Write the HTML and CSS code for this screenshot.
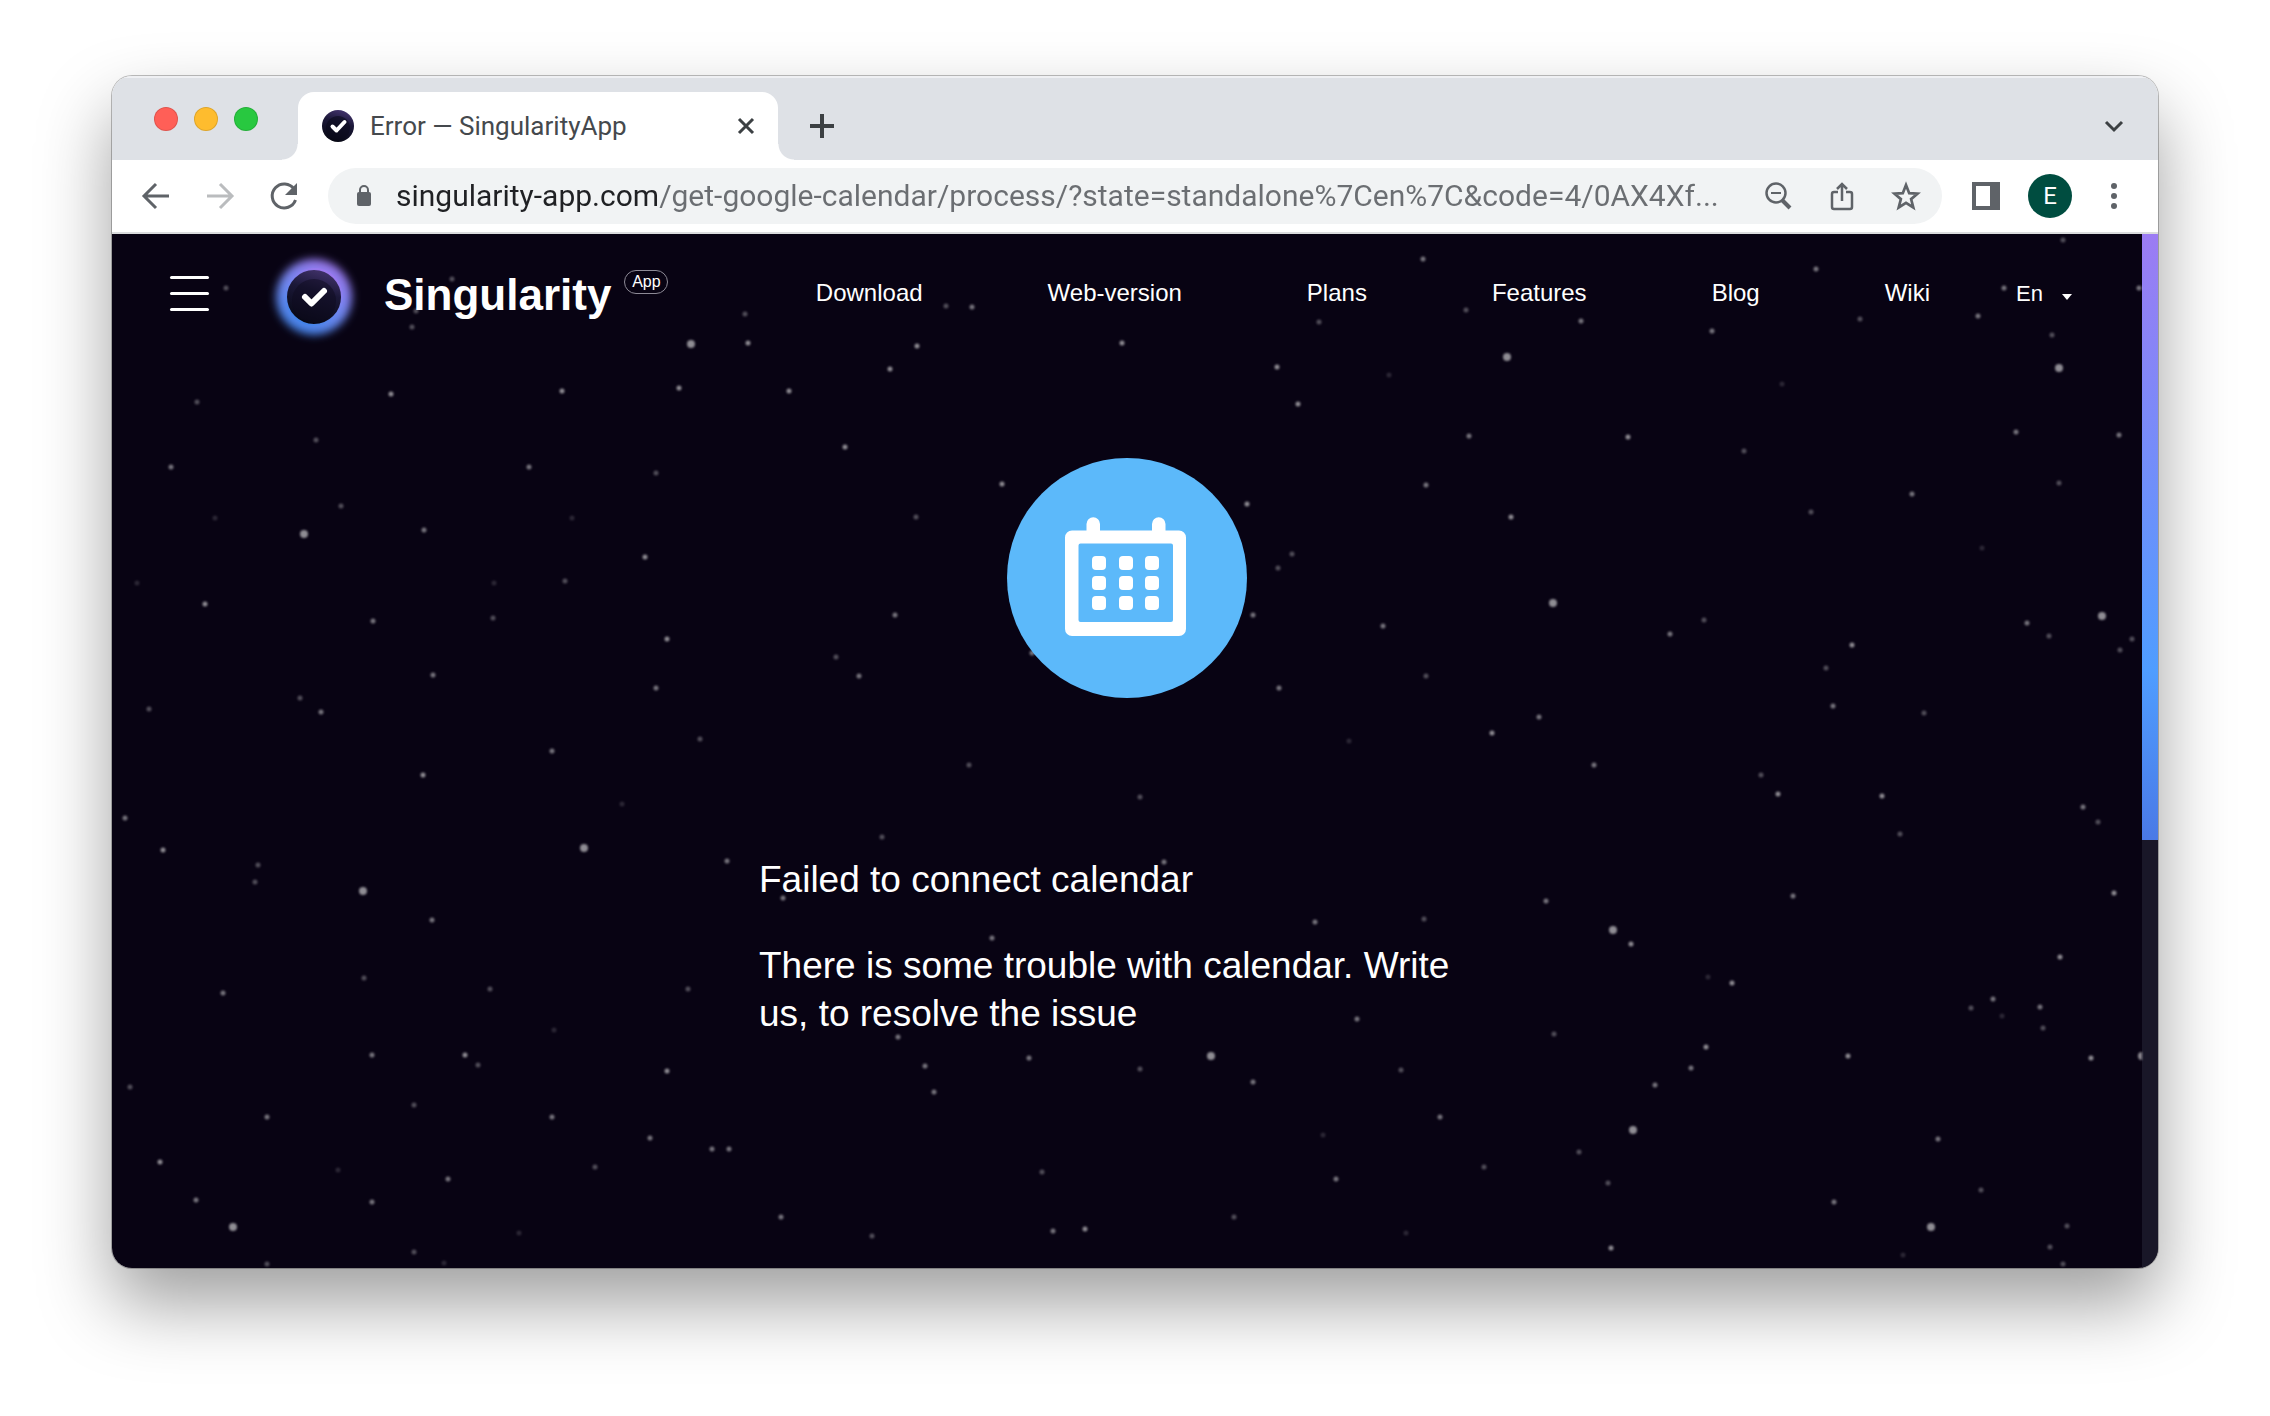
FILE: index.html
```
<!DOCTYPE html>
<html lang="en">
<head>
    <meta charset="UTF-8">
    <meta name="viewport" content="width=device-width, initial-scale=1.0">
    <title>Error — SingularityApp</title>
    <link rel="stylesheet" href="styles.css">
</head>
<body>
    <div class="window">
        <!-- tab strip -->
        <div class="tab-strip">
            <div class="lights">
                <button class="light light-close" aria-label="Close window"></button>
                <button class="light light-min" aria-label="Minimize"></button>
                <button class="light light-max" aria-label="Maximize"></button>
            </div>
            <div class="tab">
                <svg class="favicon" viewBox="0 0 32 32">
                    <defs>
                        <linearGradient id="disc" x1="0.7" y1="0" x2="0.4" y2="1">
                            <stop offset="0" stop-color="#44346e"/>
                            <stop offset="0.4" stop-color="#1b1838"/>
                            <stop offset="1" stop-color="#060712"/>
                        </linearGradient>
                    </defs>
                    <circle cx="16" cy="16" r="16" fill="url(#disc)"/>
                    <circle cx="16" cy="18" r="12" fill="#0a0a1a" opacity="0.6"/>
                    <path d="M10.500 16.500l4 4 8-8.500" fill="none" stroke="#fff" stroke-width="4" stroke-linecap="round" stroke-linejoin="round"/>
                </svg>
                <span class="tab-title">Error — SingularityApp</span>
                <button class="icon-btn" aria-label="Close tab">
                    <svg width="20" height="20" viewBox="0 0 20 20"><path d="M3 3l14 14M17 3L3 17" stroke="#3c4043" stroke-width="3"/></svg>
                </button>
            </div>
            <button class="icon-btn new-tab" aria-label="New tab">
                <svg width="26" height="26" viewBox="0 0 26 26"><path d="M13 1v24M1 13h24" stroke="#3c4043" stroke-width="4"/></svg>
            </button>
            <button class="icon-btn tab-search" aria-label="Search tabs">
                <svg width="20" height="20" viewBox="0 0 20 20"><path d="M2 6l8 8 8-8" fill="none" stroke="#3c4043" stroke-width="3"/></svg>
            </button>
        </div>

        <!-- toolbar -->
        <div class="toolbar">
            <div class="nav-buttons">
                <button class="icon-btn" aria-label="Back">
                    <svg width="32" height="32" viewBox="0 0 32 32"><path d="M29 16H5M16 4L4 16l12 12" fill="none" stroke="#5f6368" stroke-width="3"/></svg>
                </button>
                <button class="icon-btn" aria-label="Forward">
                    <svg width="32" height="32" viewBox="0 0 32 32"><path d="M3 16h24M16 4l12 12-12 12" fill="none" stroke="#babcbe" stroke-width="3"/></svg>
                </button>
                <button class="icon-btn" aria-label="Reload">
                    <svg width="32" height="32" viewBox="0 0 32 32"><path d="M26 9a12 12 0 1 0 1.500 11" fill="none" stroke="#5f6368" stroke-width="3"/><path d="M29 3v12H17z" fill="#5f6368"/></svg>
                </button>
            </div>
            <div class="omnibox">
                <svg width="16" height="24" viewBox="0 0 16 24"><path d="M4 10V6a4 4 0 0 1 8 0v4" fill="none" stroke="#5f6368" stroke-width="2"/><rect x="1" y="8" width="14" height="14" rx="2" fill="#5f6368"/></svg>
                <input class="url" type="text" aria-label="Address" value="singularity-app.com/get-google-calendar/process/?state=standalone%7Cen%7C&amp;code=4/0AX4Xf...">
                <div class="omnibox-actions">
                    <button class="icon-btn" aria-label="Zoom">
                        <svg width="32" height="32" viewBox="0 0 32 32"><circle cx="14" cy="13" r="9.500" fill="none" stroke="#5f6368" stroke-width="2.500"/><path d="M9 13h10" stroke="#5f6368" stroke-width="2"/><path d="M20 20l8 8" stroke="#5f6368" stroke-width="4"/></svg>
                    </button>
                    <button class="icon-btn" aria-label="Share">
                        <svg width="32" height="32" viewBox="0 0 32 32"><path d="M12 12H8a2 2 0 0 0-2 2v13a2 2 0 0 0 2 2h16a2 2 0 0 0 2-2V14a2 2 0 0 0-2-2h-4" fill="none" stroke="#5f6368" stroke-width="2.500"/><path d="M16 21V4M11 9l5-5 5 5" fill="none" stroke="#5f6368" stroke-width="2.500"/></svg>
                    </button>
                    <button class="icon-btn" aria-label="Bookmark">
                        <svg width="32" height="32" viewBox="0 0 32 32"><path d="M16 5l3.200 8.200 8.300.500-6.400 5.400 2.200 8.400-7.300-4.700-7.300 4.700 2.200-8.400L4.500 13.700l8.300-.500z" fill="none" stroke="#5f6368" stroke-width="2.700"/></svg>
                    </button>
                </div>
            </div>
            <button class="icon-btn" aria-label="Side panel">
                <svg width="28" height="28" viewBox="0 0 28 28"><path fill-rule="evenodd" d="M0 0h28v28H0zM4 4v20h14V4z" fill="#5f6368"/></svg>
            </button>
            <button class="avatar" aria-label="Profile">E</button>
            <button class="icon-btn menu-dots" aria-label="Menu">
                <svg width="8" height="28" viewBox="0 0 8 28"><g fill="#5f6368"><circle cx="4" cy="4" r="3"/><circle cx="4" cy="14" r="3"/><circle cx="4" cy="24" r="3"/></g></svg>
            </button>
        </div>

        <!-- page -->
        <div class="viewport">
            <div class="page">
                <svg class="stars" viewBox="112 234 2030 1034" preserveAspectRatio="xMinYMin slice" aria-hidden="true">
                    <path class="star-big" d="M691 344h0M304 534h0M1507 357h0M2059 368h0M1553 603h0M2102 616h0M584 848h0M363 891h0M233 1227h0M1613 930h0M1211 1056h0M1633 1130h0M1931 1227h0M2142 1056h0"/>
                    <path class="star-bright" d="M391 394h0M562 391h0M679 388h0M789 391h0M748 343h0M645 557h0M205 604h0M667 639h0M423 775h0M917 346h0M1122 343h0M890 369h0M1277 367h0M1298 404h0M845 447h0M1002 484h0M1247 504h0M1628 437h0M1511 517h0M1852 645h0M1492 733h0M1778 794h0M1882 796h0M163 850h0M465 1055h0M667 1071h0M160 1162h0M1085 1229h0M1631 944h0M2060 957h0M1732 983h0M1706 1047h0M1848 1056h0M1611 1248h0M2114 893h0M2091 1058h0"/>
                    <path class="star-mid" d="M171 467h0M529 467h0M424 530h0M373 621h0M433 675h0M656 688h0M321 712h0M552 751h0M125 818h0M1469 436h0M1426 485h0M895 615h0M1253 615h0M1383 626h0M859 676h0M1032 653h0M1279 688h0M1581 321h0M1712 331h0M2016 432h0M2119 435h0M1912 494h0M1670 634h0M2027 623h0M1833 706h0M1539 717h0M1594 765h0M2083 807h0M432 920h0M727 861h0M783 898h0M992 938h0M223 993h0M372 1055h0M898 1037h0M1029 1058h0M925 1066h0M934 1092h0M267 1117h0M552 1117h0M650 1138h0M712 1149h0M729 1149h0M448 1179h0M196 1200h0M372 1202h0M781 1217h0M1053 1231h0M1164 862h0M1546 901h0M1315 922h0M1793 896h0M1993 999h0M2040 1007h0M1357 1019h0M1691 1068h0M1655 1085h0M1253 1082h0M1440 1117h0M1938 1139h0M1336 1179h0M1834 1202h0M1816 269h0M2004 288h0M1978 316h0M2139 288h0M1423 259h0M972 307h0"/>
                    <path class="star-dim" d="M197 402h0M316 440h0M656 473h0M341 506h0M565 581h0M493 618h0M300 698h0M149 709h0M700 739h0M1319 322h0M916 517h0M1292 554h0M1278 568h0M836 657h0M1426 676h0M969 765h0M1140 797h0M2052 335h0M1744 451h0M1811 512h0M2059 483h0M1704 620h0M2049 636h0M2132 639h0M2120 650h0M1826 668h0M1924 713h0M1761 775h0M258 865h0M255 882h0M882 837h0M364 978h0M490 989h0M688 989h0M478 1065h0M130 1087h0M414 1105h0M595 1167h0M1042 1172h0M872 1236h0M414 1252h0M267 1264h0M1900 834h0M2098 822h0M1424 919h0M1971 1008h0M2043 1028h0M1554 1034h0M1140 1069h0M1401 1070h0M1579 1152h0M1484 1167h0M1608 1183h0M1981 1190h0M1234 1217h0M2067 1226h0M2050 1247h0M2063 1264h0M226 288h0M452 279h0M416 311h0M412 327h0M745 314h0M2063 240h0M1860 319h0M946 306h0M1466 310h0"/>
                    <path class="star-faint" d="M215 518h0M572 518h0M137 583h0M494 583h0M622 804h0M1389 375h0M1349 741h0M1782 384h0M1982 548h0M554 1030h0M338 1170h0M519 1233h0M444 1263h0M1708 977h0M2002 1016h0M1323 1135h0M1406 1233h0M1903 1255h0"/>
                </svg>

                <header class="header">
                    <button class="burger" aria-label="Menu"><span></span><span></span><span></span></button>
                    <a class="brand" href="#">
                        <svg class="brand-logo" viewBox="0 0 100 100">
                            <defs>
                                <linearGradient id="ring" x1="0.8" y1="0.1" x2="0.3" y2="1">
                                    <stop offset="0" stop-color="#9c78ee"/>
                                    <stop offset="0.5" stop-color="#6f86ee"/>
                                    <stop offset="1" stop-color="#3f83e8"/>
                                </linearGradient>
                                <filter id="glow" x="-30%" y="-30%" width="160%" height="160%"><feGaussianBlur stdDeviation="4"/></filter>
                            </defs>
                            <circle cx="50" cy="50" r="38" fill="url(#ring)" filter="url(#glow)"/>
                            <circle cx="50" cy="50" r="28" fill="url(#disc)" stroke="url(#ring)" stroke-width="2"/>
                            <circle cx="50" cy="54" r="22" fill="#0d0a1e" opacity="0.500"/>
                            <path d="M41 50l6.500 6.500L60 44" fill="none" stroke="#fff" stroke-width="6" stroke-linecap="round" stroke-linejoin="round"/>
                        </svg>
                        <span class="brand-name">Singularity</span>
                        <span class="brand-badge">App</span>
                    </a>
                    <nav class="menu">
                        <a href="#">Download</a>
                        <a href="#">Web-version</a>
                        <a href="#">Plans</a>
                        <a href="#">Features</a>
                        <a href="#">Blog</a>
                        <a href="#">Wiki</a>
                    </nav>
                    <div class="lang">
                        <select aria-label="Language">
                            <option>En</option>
                        </select>
                    </div>
                </header>

                <main class="content">
                    <svg class="calendar" viewBox="0 0 240 240" aria-hidden="true">
                        <circle cx="120" cy="120" r="120" fill="#5cb9fa"/>
                        <g fill="#fff">
                            <path fill-rule="evenodd" d="M79.500 72.500V66a6.700 6.700 0 0 1 13.500 0v6.500h52V66a6.700 6.700 0 0 1 13.500 0v6.500H172a7 7 0 0 1 7 7V171a7 7 0 0 1-7 7H65a7 7 0 0 1-7-7V79.500a7 7 0 0 1 7-7zM73.500 85.500a2 2 0 0 0-2 2V162a2 2 0 0 0 2 2H164a2 2 0 0 0 2-2V87.500a2 2 0 0 0-2-2z"/>
                            <rect x="85" y="98" width="14" height="14" rx="4"/>
                            <rect x="112" y="98" width="14" height="14" rx="4"/>
                            <rect x="138" y="98" width="14" height="14" rx="4"/>
                            <rect x="85" y="118" width="14" height="14" rx="4"/>
                            <rect x="112" y="118" width="14" height="14" rx="4"/>
                            <rect x="138" y="118" width="14" height="14" rx="4"/>
                            <rect x="85" y="138" width="14" height="14" rx="4"/>
                            <rect x="112" y="138" width="14" height="14" rx="4"/>
                            <rect x="138" y="138" width="14" height="14" rx="4"/>
                        </g>
                    </svg>
                    <div class="message">
                        <p>Failed to connect calendar</p>
                        <p>There is some trouble with calendar. Write us, to resolve the issue</p>
                    </div>
                </main>
            </div>
            <div class="scrollbar"><div class="scrollbar-thumb"></div></div>
        </div>
    </div>
</body>
</html>
```

FILE: styles.css
```
* {
    box-sizing: border-box;
}

body {
    margin: 0;
    min-height: 100vh;
    padding: 76px 112px 148px;
    display: flex;
    background-color: #fff;
    font-family: "Liberation Sans", Arial, sans-serif;
}

button {
    padding: 0;
    border: none;
    background: none;
    cursor: pointer;
}

a {
    color: inherit;
    text-decoration: none;
}

svg {
    display: block;
    flex-shrink: 0;
}

.window {
    flex: 1;
    min-width: 0;
    display: flex;
    flex-direction: column;
    border-radius: 20px;
    overflow: hidden;
    background-color: #fff;
    box-shadow: 0 0 0 1px rgba(0, 0, 0, 0.25), 0 36px 72px rgba(0, 0, 0, 0.38);
}

/* tab strip */
.tab-strip {
    display: flex;
    align-items: flex-end;
    height: 84px;
    background-color: #dee1e6;
    box-shadow: inset 0 2px 0 #eff0f3;
}

.lights {
    display: flex;
    gap: 16px;
    padding: 0 40px 29px 42px;
}

.light {
    width: 24px;
    height: 24px;
    border-radius: 50%;
    border: 1px solid rgba(0, 0, 0, 0.12);
}

.light-close { background-color: #ff5f57; }
.light-min { background-color: #febc2e; }
.light-max { background-color: #28c840; }

.tab {
    position: relative;
    display: flex;
    align-items: center;
    width: 480px;
    height: 68px;
    padding: 0 22px 0 24px;
    border-radius: 16px 16px 0 0;
    background-color: #fff;
}

/* curved feet of the tab */
.tab::before,
.tab::after {
    content: "";
    position: absolute;
    bottom: 0;
    width: 16px;
    height: 16px;
}

.tab::before {
    right: 100%;
    background: radial-gradient(circle at 0 0, transparent 15px, #fff 16px);
}

.tab::after {
    left: 100%;
    background: radial-gradient(circle at 100% 0, transparent 15px, #fff 16px);
}

.favicon {
    width: 32px;
    height: 32px;
}

.tab-title {
    flex: 1;
    margin-left: 16px;
    font-family: Roboto, sans-serif;
    font-size: 26px;
    color: #45494d;
    white-space: nowrap;
}

.new-tab {
    margin-left: 31px;
    margin-bottom: 21px;
}

.tab-search {
    margin: 0 34px 24px auto;
}

/* toolbar */
.toolbar {
    display: flex;
    align-items: center;
    height: 74px;
    padding: 0 40px 0 28px;
    border-bottom: 2px solid #dadcdd;
}

.nav-buttons {
    display: flex;
    gap: 32px;
    margin-right: 28px;
}

.omnibox {
    flex: 1;
    display: flex;
    align-items: center;
    height: 56px;
    margin-right: 30px;
    padding: 0 20px 0 28px;
    border-radius: 28px;
    background-color: #f1f3f4;
}

.url {
    flex: 1;
    min-width: 0;
    margin-left: 24px;
    padding: 0;
    border: none;
    outline: none;
    font-family: Roboto, sans-serif;
    font-size: 30px;
    line-height: 40px;
    /* host is darker than the path */
    background: linear-gradient(90deg, #202124 263px, #6b6e72 263px);
    -webkit-background-clip: text;
    background-clip: text;
    color: transparent;
}

.omnibox-actions {
    display: flex;
    gap: 32px;
}

.avatar {
    width: 44px;
    height: 44px;
    margin: 0 38px 0 28px;
    border-radius: 50%;
    background-color: #004d40;
    color: #fff;
    font-family: Roboto, sans-serif;
    font-size: 24px;
}

.menu-dots {
    width: 52px;
    margin: 0 -22px;
    display: flex;
    justify-content: center;
}

/* page */
.viewport {
    flex: 1;
    display: flex;
    background-color: #080313;
    color: #fff;
}

.page {
    position: relative;
    flex: 1;
    min-width: 0;
}

.stars {
    position: absolute;
    top: 0;
    left: 0;
    width: 100%;
    height: 100%;
    filter: blur(1px);
}

.stars path {
    fill: none;
    stroke: #fff;
    stroke-width: 5;
    stroke-linecap: round;
}

.stars .star-big { stroke-width: 8; stroke-opacity: 0.55; }
.stars .star-bright { stroke-opacity: 0.55; }
.stars .star-mid { stroke-opacity: 0.45; }
.stars .star-dim { stroke-opacity: 0.3; }
.stars .star-faint { stroke-opacity: 0.15; }

.header {
    position: relative;
    display: flex;
    align-items: center;
    height: 118px;
    padding: 0 70px 0 58px;
    font-size: 24px;
}

.burger {
    display: flex;
    flex-direction: column;
    gap: 13px;
    width: 39px;
}

.burger span {
    height: 3px;
    border-radius: 2px;
    background-color: #fff;
}

.brand {
    display: flex;
    align-items: center;
    margin-left: 55px;
}

.brand-logo {
    width: 100px;
    height: 100px;
    margin-top: 8px;
}

.brand-name {
    margin: 4px 0 0 20px;
    font-size: 44px;
    font-weight: bold;
}

.brand-badge {
    align-self: flex-start;
    width: 44px;
    height: 24px;
    margin: 31px 0 0 13px;
    border: 1px solid #8d8a96;
    border-radius: 12px;
    font-size: 16px;
    line-height: 22px;
    text-align: center;
}

.menu {
    display: flex;
    gap: 125px;
    margin-left: auto;
}

.lang {
    display: flex;
    align-items: center;
    margin-left: 86px;
}

.lang select {
    width: 46px;
    padding: 0;
    border: none;
    background: none;
    color: #fff;
    font-family: inherit;
    font-size: 22px;
    appearance: none;
}

.lang::after {
    content: "";
    width: 10px;
    height: 6px;
    margin-top: 8px;
    background-color: #fff;
    clip-path: polygon(0 0, 100% 0, 50% 100%);
}

.content {
    position: relative;
    display: flex;
    flex-direction: column;
    align-items: center;
    padding: 106px 40px;
}

.calendar {
    width: 240px;
    height: 240px;
}

.message {
    width: 100%;
    max-width: 736px;
    margin-top: 158px;
    font-size: 37px;
    line-height: 48px;
}

.message p {
    margin: 0 0 38px;
}

.scrollbar {
    width: 16px;
    background-color: #191728;
}

.scrollbar-thumb {
    height: 58.6%;
    background: linear-gradient(190deg, #9c7cf3, #4f9dff 72%, #4a79e6);
}
```
